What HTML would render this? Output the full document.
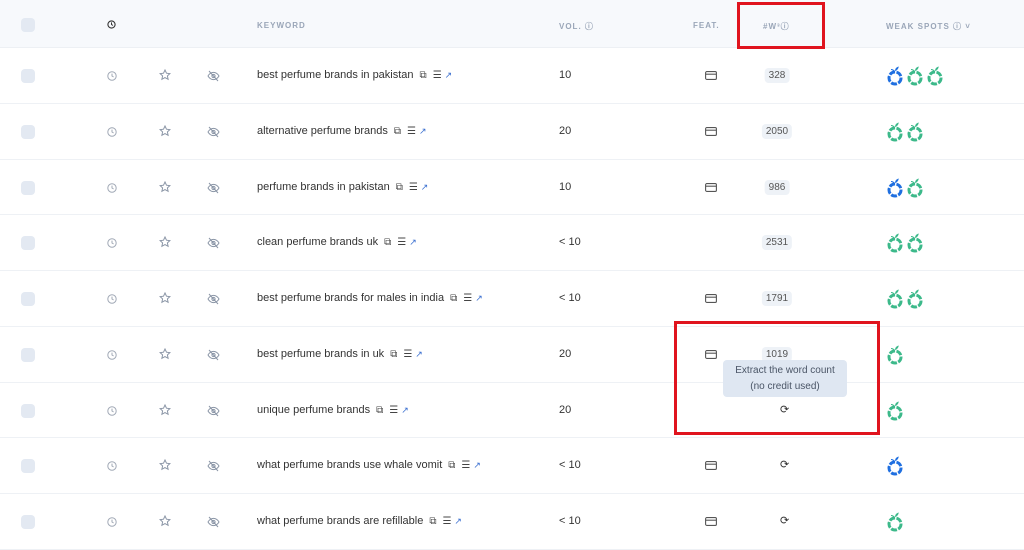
<!DOCTYPE html>
<html><head><meta charset="utf-8"><style>
*{margin:0;padding:0;box-sizing:border-box}
body{width:1024px;height:540px;overflow:hidden;background:#fff;font-family:"Liberation Sans",sans-serif;position:relative;color:#3a3f4a}
.hdr{position:absolute;left:0;top:0;width:1024px;height:48px;background:#f7f9fc;border-bottom:1px solid #edf0f4}
.h{position:absolute;top:21px;font-size:8px;letter-spacing:1px;color:#9aa6b8;font-weight:bold}
.row{position:absolute;left:0;width:1024px;height:56px;border-bottom:1px solid #eef1f5}
.cb{position:absolute;left:21px;width:14px;height:14px;border-radius:4px;background:#e3e9f2}
.ic{position:absolute}
.kw{position:absolute;left:257px;font-size:11px;color:#333;white-space:nowrap;display:flex;align-items:center;gap:6px}
.vol{position:absolute;left:559px;font-size:11px;color:#333}
.pill{position:absolute;font-size:10px;color:#555;background:#eef2f7;border-radius:4px;padding:2px 4px;transform:translateX(-50%);left:777px}
.red{position:absolute;border:3px solid #e0141e}
.tip{position:absolute;left:723px;top:360px;width:124px;height:37px;background:#dfe7f2;border-radius:4px;font-size:10px;color:#4a5566;text-align:center;line-height:16px;padding-top:3px}
</style></head><body>
<div class="hdr">
<div class="cb" style="top:18px"></div>
<svg class="ic" style="left:107px;top:20px" width="9" height="9" viewBox="0 0 10 10"><circle cx="5" cy="5" r="4" fill="none" stroke="#333" stroke-width="1.2"/><path d="M5 2.6V5l1.6 1" fill="none" stroke="#333" stroke-width="1.1"/></svg>
<div class="h" style="left:257px">KEYWORD</div>
<div class="h" style="left:559px">VOL. ⓘ</div>
<div class="h" style="left:693px">FEAT.</div>
<div class="h" style="left:763px">#W³ⓘ</div>
<div class="h" style="left:886px">WEAK SPOTS ⓘ ˅</div>
</div>
<div id="rows"></div>
<div class="tip">Extract the word count<br>(no credit used)</div>
<div class="red" style="left:737px;top:2px;width:88px;height:47px"></div>
<div class="red" style="left:674px;top:321px;width:206px;height:114px"></div>
<script>
const d=[["best perfume brands in pakistan","10",1,"328","BGG"],["alternative perfume brands","20",1,"2050","GG"],["perfume brands in pakistan","10",1,"986","BG"],["clean perfume brands uk","< 10",0,"2531","GG"],["best perfume brands for males in india","< 10",1,"1791","GG"],["best perfume brands in uk","20",1,"1019","G"],["unique perfume brands","20",0,"","G"],["what perfume brands use whale vomit","< 10",1,"","B"],["what perfume brands are refillable","< 10",1,"","G"]];
const tops=[48,104,160,215,271,327,383,438,494];
function spot(c,x){const col=c=="B"?"#1f6fe0":"#3cb98a";return `<svg class="ic" style="left:${x}px;top:-12px" width="18" height="22" viewBox="0 0 18 22"><circle cx="9" cy="14" r="6" fill="none" stroke="${col}" stroke-width="3" stroke-dasharray="6 1.4"/><path d="M9 7C9 4.5 10.5 3 12.8 2.5 12.3 5 11 6.6 9 7Z" fill="${col}"/><path d="M8.5 7.5C7.5 6 6 5.5 5 5.5" stroke="${col}" stroke-width="1" fill="none"/></svg>`}
let h="";
d.forEach((r,i)=>{const t=tops[i];
h+=`<div class="row" style="top:${t}px;height:${(tops[i+1]||550)-t}px"><div style="position:absolute;top:28px;left:0;width:1024px">
<div class="cb" style="top:-7px"></div>
<svg class="ic" style="left:107px;top:-5px" width="10" height="10" viewBox="0 0 10 10"><circle cx="5" cy="5" r="4.2" fill="none" stroke="#a0a8b5" stroke-width="1"/><path d="M5 2.6V5l1.6 1" fill="none" stroke="#a0a8b5" stroke-width="1"/></svg>
<svg class="ic" style="left:159px;top:-7px" width="12" height="12" viewBox="0 0 12 12"><path d="M6 1l1.5 3.2 3.4.4-2.5 2.3.7 3.4L6 8.6 2.9 10.3l.7-3.4L1.1 4.6l3.4-.4z" fill="none" stroke="#8a95a6" stroke-width="1"/></svg>
<svg class="ic" style="left:207px;top:-6px" width="13" height="12" viewBox="0 0 13 12"><path d="M1 6c1.5-2.5 3.3-3.6 5.5-3.6S10.5 3.5 12 6c-1.5 2.5-3.3 3.6-5.5 3.6S2.5 8.5 1 6z" fill="none" stroke="#8a95a6" stroke-width="1"/><circle cx="6.5" cy="6" r="1.6" fill="none" stroke="#8a95a6"/><path d="M2 1l9 10" stroke="#8a95a6" stroke-width="1"/></svg>
<div class="kw" style="top:-7px">${r[0]} <span style="font-size:10px;color:#444">⧉</span><span style="font-size:10px;color:#444">☰</span><span style="font-size:9px;color:#3a6fd0;margin-left:-3px">↗</span></div>
<div class="vol" style="top:-7px">${r[1]}</div>
${r[2]?`<svg class="ic" style="left:705px;top:-5px" width="12" height="9" viewBox="0 0 12 9"><rect x="0.6" y="0.6" width="10.8" height="7.8" rx="1.2" fill="none" stroke="#555" stroke-width="1.1"/><path d="M1 3.2h10" stroke="#555" stroke-width="1.1"/></svg>`:""}
${r[3]?`<div class="pill" style="top:-8px">${r[3]}</div>`:`<div class="ic" style="left:780px;top:-8px;font-size:11px;color:#333">⟳</div>`}
${[...r[4]].map((c,j)=>spot(c,886+j*20)).join("")}
</div></div>`});
document.getElementById("rows").innerHTML=h;
</script>
</body></html>
